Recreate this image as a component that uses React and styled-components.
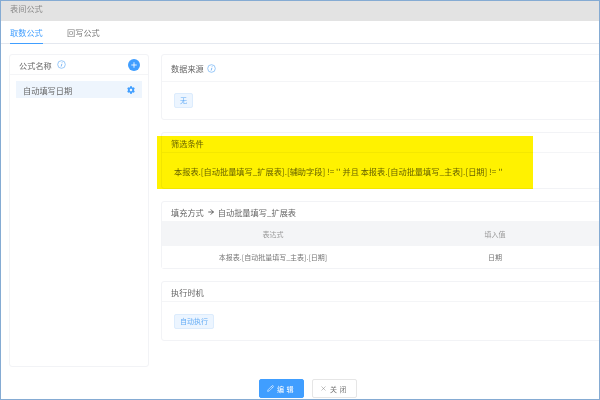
import React from "react";
import styled, { createGlobalStyle } from "styled-components";
import { X, Pencil, ArrowRight, Plus } from "lucide-react";
import { FaCog } from "react-icons/fa";

const Global = createGlobalStyle`
  html, body { margin: 0; padding: 0; background: #fff; }
  body { font-family: "Noto Sans CJK SC", "Noto Sans", sans-serif; }
`;

const Frame = styled.div`
  position: relative;
  width: 600px;
  height: 400px;
  box-sizing: border-box;
  border: 1px solid #85abd3;
  overflow: hidden;
  display: flex;
  flex-direction: column;
  background: #fff;
`;
const TitleBar = styled.div`
  height: 20px;
  flex: none;
  background: #e3e3e3;
  color: #8a8a8a;
  font-size: 8.2px;
  line-height: 15px;
  padding-left: 9px;
`;
const Tabs = styled.div`
  height: 23px;
  flex: none;
  display: flex;
  gap: 24px;
  padding-left: 9px;
  border-bottom: 1px solid #e4e8ef;
  box-sizing: border-box;
`;
const Tab = styled.div`
  width: 33px;
  font-size: 8.2px;
  line-height: 23px;
  color: ${(p) => (p.$active ? "#409eff" : "#777")};
  box-shadow: ${(p) => (p.$active ? "0 1px 0 #409eff" : "none")};
`;
const Body = styled.div`
  display: flex;
  gap: 12px;
  padding: 10px 0 0 8px;
  align-items: flex-start;
`;
const Card = styled.div`
  border: 1px solid #f2f3f6;
  border-radius: 3px;
  box-sizing: border-box;
  background: #fff;
`;
const SideCard = styled(Card)`
  width: 140px;
  height: 313px;
  flex: none;
`;
const SideHead = styled.div`
  height: 19px;
  display: flex;
  align-items: center;
  padding: 0 8px 0 9px;
  color: #666;
  font-size: 8.2px;
  border-bottom: 1px solid #f4f5f7;
`;
const HintGap = styled.span`
  width: ${(p) => p.$w}px;
`;
const Grow = styled.span`
  flex: 1;
`;
const AddButton = styled.span`
  width: 12px;
  height: 12px;
  border-radius: 50%;
  background: #409eff;
  color: #fff;
  display: flex;
  align-items: center;
  justify-content: center;
`;
const SideItem = styled.div`
  height: 17px;
  margin: 6px 6px 0;
  padding: 0 7px 0 7px;
  background: #eef5fd;
  display: flex;
  align-items: center;
  color: #666;
  font-size: 8.2px;
`;
const Main = styled.div`
  width: 470px;
  flex: none;
  display: flex;
  flex-direction: column;
  gap: 12px;
`;
const CardHead = styled.div`
  height: ${(p) => p.$h}px;
  display: flex;
  align-items: center;
  gap: 3px;
  padding-left: 9px;
  color: #666;
  font-size: 8.2px;
  border-bottom: 1px solid #f4f5f7;
  box-sizing: border-box;
`;
const CardBody = styled.div`
  height: ${(p) => p.$h}px;
  display: flex;
  align-items: center;
  padding-left: 12px;
  box-sizing: border-box;
`;
const FilterText = styled.div`
  color: #666;
  font-size: 8.2px;
  white-space: pre;
`;
const TagChip = styled.span`
  height: 15px;
  box-sizing: border-box;
  padding: 0 5px;
  border: 1px solid #dcecfd;
  border-radius: 2px;
  background: #ecf5ff;
  color: #64acf5;
  font-size: 7px;
  line-height: 13px;
`;
const Row = styled.div`
  display: grid;
  grid-template-columns: 222px 222px 1fr;
  height: ${(p) => p.$h}px;
  background: ${(p) => (p.$head ? "#f4f5f7" : "#fff")};
  align-items: center;
  color: ${(p) => (p.$head ? "#999" : "#777")};
  font-size: 7px;
`;
const Cell = styled.div`
  text-align: center;
`;
const Highlight = styled.div`
  position: absolute;
  left: 156px;
  top: 135px;
  width: 376px;
  height: 53px;
  background: #fff200;
  mix-blend-mode: multiply;
`;
const Footer = styled.div`
  position: absolute;
  left: 0;
  right: 0;
  top: 378px;
  display: flex;
  justify-content: center;
  gap: 8px;
  padding-left: 16px;
`;
const FootButton = styled.div`
  width: 45px;
  height: 19px;
  box-sizing: border-box;
  border-radius: 2px;
  border: 1px solid ${(p) => (p.$primary ? "#409eff" : "#e6e6e6")};
  background: ${(p) => (p.$primary ? "#409eff" : "#fff")};
  color: ${(p) => (p.$primary ? "#fff" : "#777")};
  font-size: 7px;
  letter-spacing: 2.5px;
  display: flex;
  align-items: center;
  justify-content: center;
  gap: 3px;
`;
const InfoIcon = () => (
  <svg width="9" height="9" viewBox="0 0 18 18" fill="none" stroke="#6fb1f5">
    <circle cx="9" cy="9" r="7.6" strokeWidth="1.4" />
    <path d="M9.8 7.6 8.3 13M10.2 4.6v1.2" strokeWidth="1.8" />
  </svg>
);

export default function App() {
  return (
    <Frame>
      <Global />
      <TitleBar>表间公式</TitleBar>
      <Tabs>
        <Tab $active>取数公式</Tab>
        <Tab>回写公式</Tab>
      </Tabs>
      <Body>
        <SideCard>
          <SideHead>
            公式名称
            <HintGap $w={5} />
            <InfoIcon />
            <Grow />
            <AddButton><Plus size={8} strokeWidth={2.5} /></AddButton>
          </SideHead>
          <SideItem>
            自动填写日期
            <Grow />
            <FaCog size={8} color="#409eff" />
          </SideItem>
        </SideCard>
        <Main>
          <Card>
            <CardHead $h={27}>数据来源 <InfoIcon /></CardHead>
            <CardBody $h={37}><TagChip>无</TagChip></CardBody>
          </Card>
          <Card>
            <CardHead $h={20}>筛选条件</CardHead>
            <CardBody $h={35}>
              <FilterText>本报表.[自动批量填写_扩展表].[辅助字段] != '' 并且 本报表.[自动批量填写_主表].[日期] != ''</FilterText>
            </CardBody>
          </Card>
          <Card>
            <CardHead $h={20}>
              填充方式 <ArrowRight size={8} color="#444" strokeWidth={2.5} /> 自动批量填写_扩展表
            </CardHead>
            <Row $h={24} $head>
              <Cell>表达式</Cell>
              <Cell>填入值</Cell>
            </Row>
            <Row $h={22}>
              <Cell>本报表.[自动批量填写_主表].[日期]</Cell>
              <Cell>日期</Cell>
            </Row>
          </Card>
          <Card>
            <CardHead $h={20}>执行时机</CardHead>
            <CardBody $h={38}><TagChip>自动执行</TagChip></CardBody>
          </Card>
        </Main>
      </Body>
      <Highlight />
      <Footer>
        <FootButton $primary><Pencil size={7} strokeWidth={2} />编辑</FootButton>
        <FootButton><X size={7} strokeWidth={1.5} />关闭</FootButton>
      </Footer>
    </Frame>
  );
}
